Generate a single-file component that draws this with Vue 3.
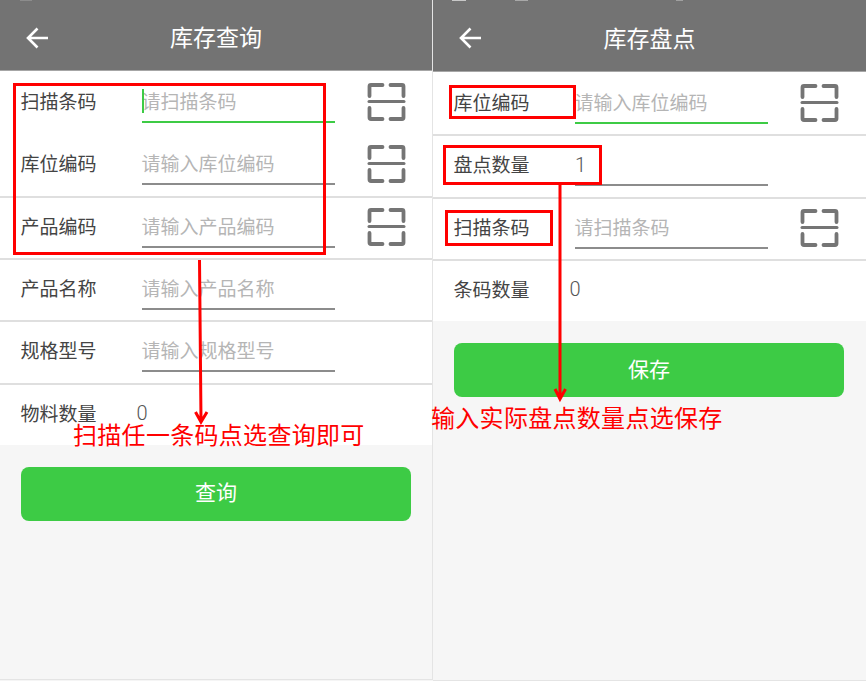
<script setup>
const panels = [
  {
    title: '库存查询',
    button: '查询',
    rows: [
      { label: '扫描条码', placeholder: '请扫描条码', scan: true, focus: true, caret: true },
      { label: '库位编码', placeholder: '请输入库位编码', scan: true, plain: true },
      { label: '产品编码', placeholder: '请输入产品编码', scan: true },
      { label: '产品名称', placeholder: '请输入产品名称' },
      { label: '规格型号', placeholder: '请输入规格型号' },
      { label: '物料数量', count: '0' }
    ]
  },
  {
    title: '库存盘点',
    button: '保存',
    rows: [
      { label: '库位编码', placeholder: '请输入库位编码', scan: true, focus: true },
      { label: '盘点数量', value: '1' },
      { label: '扫描条码', placeholder: '请扫描条码', scan: true },
      { label: '条码数量', count: '0' }
    ]
  }
]
</script>

<template>
  <div class="page">
    <section v-for="panel in panels" :key="panel.title" class="panel">
      <header class="bar">
        <svg class="back" width="24" height="24" viewBox="0 0 24 24">
          <path d="M2 11h20M11.500 1.500 2 11l9.500 9.500" fill="none" stroke="#fff" stroke-width="2.600" />
        </svg>
        <h1 class="title">{{ panel.title }}</h1>
      </header>

      <div class="form">
        <div v-for="row in panel.rows" :key="row.label" class="row" :class="{ plain: row.plain }">
          <span class="label">{{ row.label }}</span>
          <span v-if="row.count" class="count">{{ row.count }}</span>
          <div v-else class="field" :class="{ focus: row.focus }">
            <i v-if="row.caret" class="caret"></i>
            <span v-if="row.value" class="value">{{ row.value }}</span>
            <span v-else class="placeholder">{{ row.placeholder }}</span>
          </div>
          <svg v-if="row.scan" class="scan" width="39" height="38" viewBox="0 0 39 38">
            <path d="M2.500 13V3.500A1.500 1.500 0 0 1 4 2H15.500M36.500 13V3.500A1.500 1.500 0 0 0 35 2H23.500M2.500 25V34.500A1.500 1.500 0 0 0 4 36H15.500M36.500 25V34.500A1.500 1.500 0 0 1 35 36H23.500" fill="none" stroke="#757575" stroke-width="3.800" stroke-linecap="round" />
            <path d="M2 18.500h35" stroke="#757575" stroke-width="3" stroke-linecap="round" />
          </svg>
        </div>
      </div>

      <div class="actions">
        <button class="btn">{{ panel.button }}</button>
      </div>
    </section>

    <!-- red markup drawn on top of the screenshots -->
    <svg class="marks" width="866" height="681" viewBox="0 0 866 681">
      <rect x="452" y="0" width="14" height="1" fill="#c8c8c8" />
      <rect x="515" y="0" width="13" height="1" fill="#a8a8a8" />
      <rect x="676" y="0" width="7" height="1" fill="#a0a0a0" />
      <rect x="20" y="0" width="12" height="1" fill="#8c8c8c" />
      <g fill="none" stroke="#f00" stroke-width="3">
        <rect x="14.500" y="84.500" width="310" height="169" />
        <rect x="450.500" y="86.500" width="124" height="31" />
        <rect x="444.500" y="146.500" width="156" height="37" />
        <rect x="446.500" y="211.500" width="105" height="33" />
        <path d="M199.500 260 201 421M195.500 412l5.500 10 6-10" />
        <path d="M560 185v214M555 389l5 10 5.500-10" />
      </g>
    </svg>
    <span class="note note-left">扫描任一条码点选查询即可</span>
    <span class="note note-right">输入实际盘点数量点选保存</span>
  </div>
</template>

<style>
html, body {
  margin: 0;
  background: #f5f5f5;
}
</style>

<style scoped>
.page {
  position: relative;
  display: flex;
  align-items: flex-start;
  width: 866px;
  height: 681px;
  overflow: hidden;
  font-family: "Noto Sans CJK SC", "Noto Sans", sans-serif;
}
.panel {
  width: 433px;
  height: 680px;
  box-sizing: border-box;
  border-right: 1px solid #e4e4e4;
  border-bottom: 1px solid #e4e4e4;
  background: #f6f6f6;
}
.panel:last-of-type {
  height: 681px;
  border-right: none;
}
.panel:last-of-type .bar {
  height: 72px;
}
.bar {
  display: flex;
  align-items: center;
  position: relative;
  height: 71px;
  box-sizing: border-box;
  padding-top: 2px;
  background: #737373;
  border-bottom: 1px solid #a6a6a6;
}
.back {
  position: absolute;
  left: 26px;
  top: 27px;
}
.title {
  flex: 1;
  margin: 0;
  text-align: center;
  font-size: 23px;
  font-weight: 400;
  color: #fff;
}
.form {
  background: #fff;
}
.row {
  display: flex;
  align-items: flex-start;
  height: 62.330px;
  box-sizing: border-box;
  padding-left: 21px;
  border-top: 2px solid #dfdfdf;
}
.row:first-child,
.row.plain {
  border-top-color: #fff;
}
.label {
  width: 121px;
  flex-shrink: 0;
  margin-left: -0.500px;
  font-size: 19px;
  line-height: 55px;
  color: #444;
}
.field {
  position: relative;
  width: 193px;
  height: 50px;
  box-sizing: border-box;
  margin-left: 0.500px;
  border-bottom: 2px solid #8c8c8c;
  font-size: 19px;
  line-height: 55px;
}
.field.focus {
  border-bottom-color: #3dcb45;
}
.caret {
  position: absolute;
  left: 0;
  top: 16px;
  width: 2px;
  height: 24px;
  background: #3dcb45;
}
.placeholder {
  margin-left: -0.500px;
  color: #b5b5b5;
}
.value {
  font-family: Roboto, sans-serif;
  font-weight: 300;
  font-size: 20px;
  color: #555;
}
.count {
  margin-left: -5px;
  font-family: Roboto, sans-serif;
  font-weight: 300;
  font-size: 20px;
  line-height: 56px;
  color: #555;
}
.scan {
  margin: 10px 0 0 32px;
}
.actions {
  padding: 22px 21px 0;
}
.btn {
  display: block;
  width: 390px;
  height: 54px;
  padding: 0 0 5px;
  border: none;
  border-radius: 8px;
  background: #3dcb45;
  color: #fff;
  font-family: inherit;
  font-size: 21px;
}
.marks {
  position: absolute;
  left: 0;
  top: 0;
  pointer-events: none;
}
.note {
  position: absolute;
  font-size: 24px;
  letter-spacing: 0.300px;
  line-height: 28px;
  white-space: nowrap;
  color: #f00;
}
.note-left {
  left: 73px;
  top: 420px;
}
.note-right {
  left: 431px;
  top: 403px;
}
</style>
